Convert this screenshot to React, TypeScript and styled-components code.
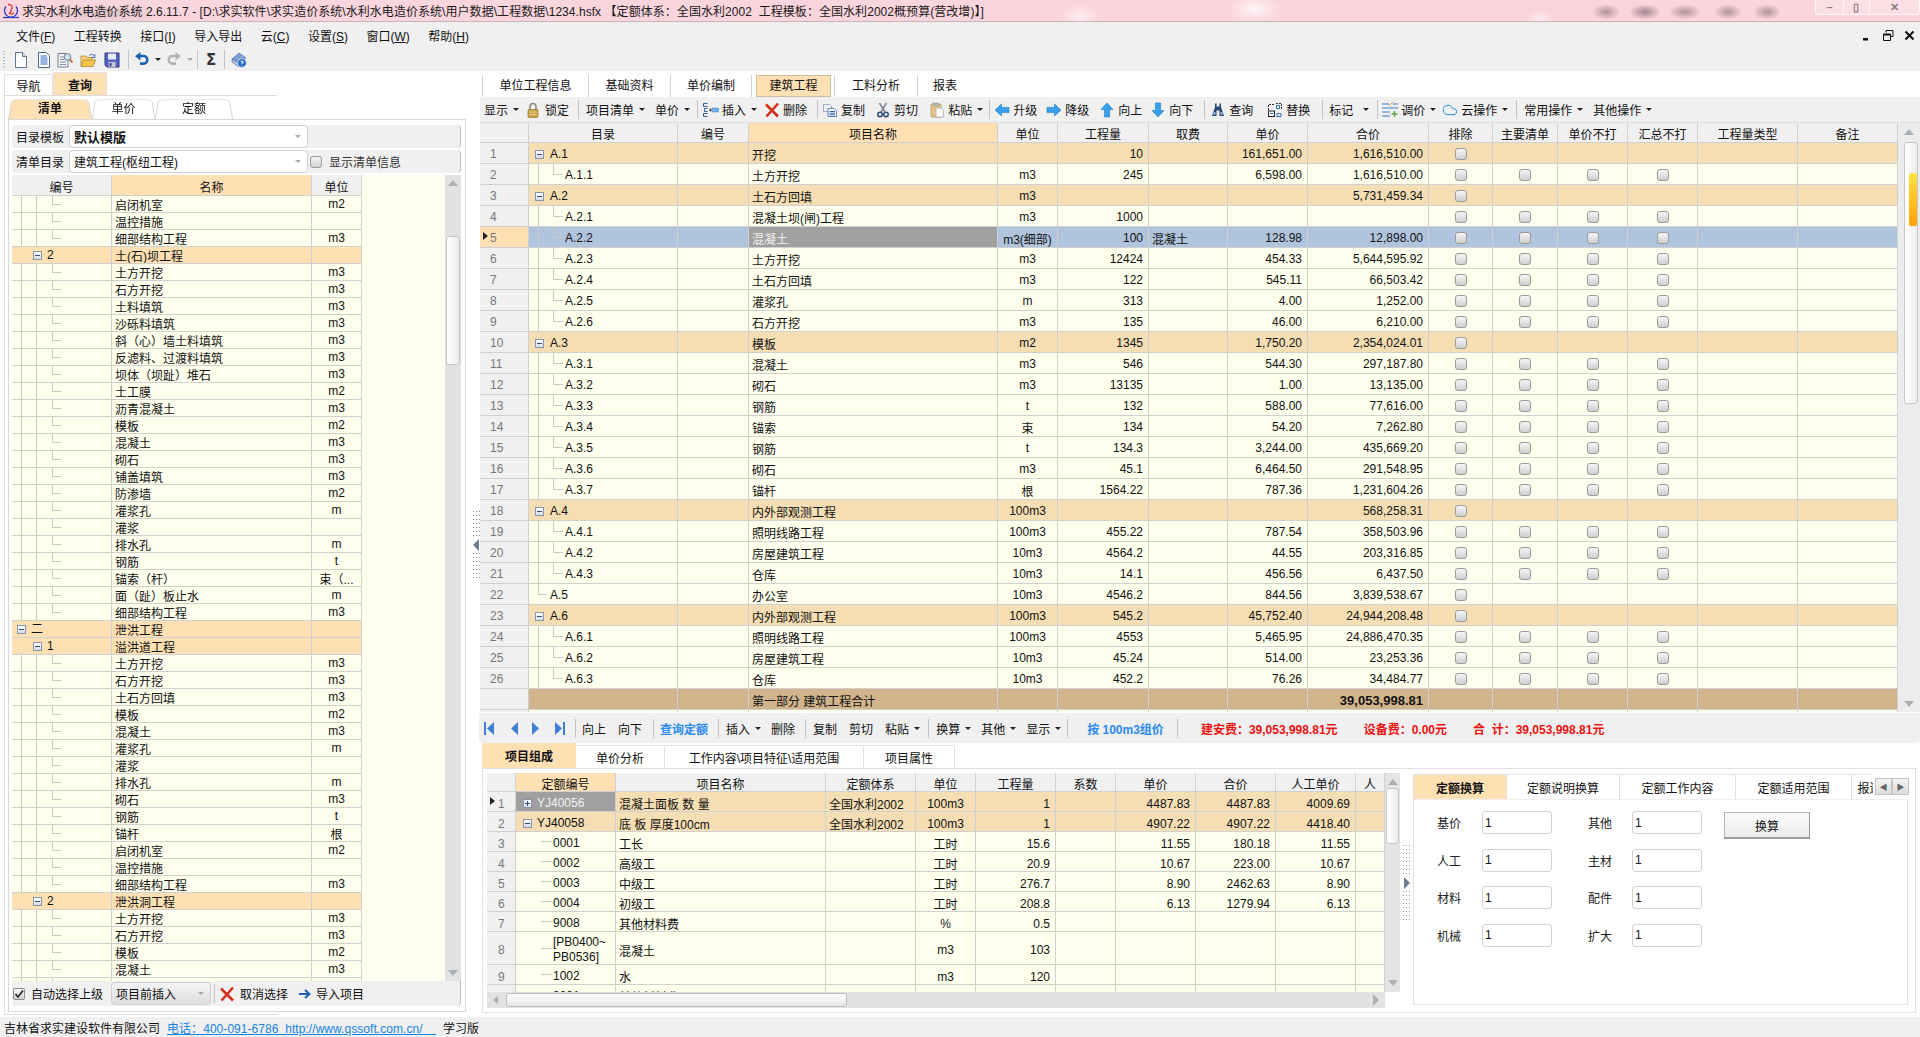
import React from 'react';
import styled, { createGlobalStyle } from 'styled-components';
import { Cloud } from 'lucide-react';

const FONT = '"Liberation Sans", "Noto Sans CJK SC", sans-serif';
const LINE = '#d0d0d0';
const CREAM = '#ffffee';
const HEAD = '#ffe0b2';
const WHEAT = '#f5deb3';
const TAN = '#d2b48c';
const STEEL = '#b0c4de';
const PANEL = '#f0f0f0';

const Global = createGlobalStyle`
  html, body { margin: 0; padding: 0; height: 100%; overflow: hidden; background: #fff; }
  body { font-family: ${FONT}; font-size: 12px; color: #111; }
  #root { height: 100%; }
  * { box-sizing: border-box; }
`;

/* ---------- icons ---------- */
const Arrow = ({ rot = 0 }: { rot?: number }) => (
  <svg width="16" height="16" viewBox="0 0 16 16">
    <path transform={`rotate(${rot} 8 8)`} d="M1 8 7.5 2v3.4H15v5.2H7.5V14Z" fill="#38a0ea" stroke="#1f78bd" strokeWidth=".6" />
  </svg>
);

const icons: Record<string, React.ReactNode> = {
  lock: (
    <svg width="16" height="16" viewBox="0 0 16 16">
      <path d="M5 8V4.500a3 3 0 0 1 6 0V8" fill="none" stroke="#8d8d80" strokeWidth="1.600" />
      <rect x="3" y="7.500" width="10" height="8" rx="1" fill="#c9a24a" stroke="#8b6a22" strokeWidth=".6" />
      <path d="M4 10h8M4 12.500h8" stroke="#e8d08e" />
    </svg>
  ),
  insert: (
    <svg width="17" height="16" viewBox="0 0 17 16">
      <path d="M5.500 1.500h-4v3h4M5.500 6.500h-3v3h3M5.500 11.500h-4v3h4" fill="none" stroke="#2d5f9e" />
      <path d="M7 8h3M8.500 6.500v3" stroke="#333" />
      <rect x="10.500" y="6" width="6" height="4" fill="#6fb4ee" stroke="#3b83c4" strokeWidth=".5" />
    </svg>
  ),
  del: (
    <svg width="16" height="16" viewBox="0 0 16 16">
      <path d="M2 2.500 14 14.500M14 1.500 2.500 14.500" stroke="#d4301f" strokeWidth="2.600" />
    </svg>
  ),
  copy: (
    <svg width="16" height="16" viewBox="0 0 16 16">
      <path d="M1.500 2.500h6l2 2v5h-8Z" fill="#eef2f8" stroke="#7a90ad" strokeWidth=".7" />
      <path d="M6 6.500h6l2.500 2.500v5.500H6Z" fill="#fff" stroke="#3c62a0" strokeWidth=".8" />
      <path d="M7.500 9.500h5.500M7.500 11.200h5.500M7.500 12.900h5.500" stroke="#2f64b5" />
    </svg>
  ),
  cut: (
    <svg width="16" height="16" viewBox="0 0 16 16">
      <path d="M4.500 1 10 10M11.500 1 6 10" stroke="#7b8794" strokeWidth="1.500" />
      <circle cx="5" cy="12.500" r="2.200" fill="none" stroke="#2a4a78" strokeWidth="1.500" />
      <circle cx="11" cy="12.500" r="2.200" fill="none" stroke="#2a4a78" strokeWidth="1.500" />
    </svg>
  ),
  paste: (
    <svg width="16" height="16" viewBox="0 0 16 16">
      <rect x="2" y="2" width="10" height="13" rx="1" fill="#e3c58a" stroke="#a98a4e" strokeWidth=".7" />
      <rect x="4.500" y="1" width="5" height="2.600" fill="#b9bec6" stroke="#80858d" strokeWidth=".5" />
      <path d="M7 6h5l2.500 2.500V15H7Z" fill="#fff" stroke="#9aa3ad" strokeWidth=".7" />
    </svg>
  ),
  left: <Arrow />,
  right: <Arrow rot={180} />,
  up: <Arrow rot={90} />,
  down: <Arrow rot={270} />,
  find: (
    <svg width="16" height="16" viewBox="0 0 16 16">
      <path d="M5 1.500h1.600v3h2.800v-3H11V5l3 9H9.500V8.500h-3V14H2L5 5Z" fill="#27466f" />
      <path d="M3.500 10h2v3h-2ZM10.500 10h2v3h-2Z" fill="#8eb2dc" />
    </svg>
  ),
  replace: (
    <svg width="16" height="16" viewBox="0 0 16 16">
      <path d="M1.500 8V2.500H7M9 1.500h5.500V7" fill="none" stroke="#333" strokeDasharray="2 1" />
      <rect x="1.500" y="9" width="6" height="5.500" fill="#fff" stroke="#1f1f1f" />
      <path d="M3 11.500h3M9.500 3.500h3v3h-3ZM10 11.500h4v3h-4Z" fill="none" stroke="#2a6cb0" />
    </svg>
  ),
  tune: (
    <svg width="16" height="16" viewBox="0 0 16 16">
      <path d="M0 2h7M11 2h5M0 6h16M0 10h8M0 14h8" stroke="#3d78c8" />
      <path d="m7 4 4-4" stroke="#d4a23a" />
      <path d="M12.500 9v6M9.500 12h6" stroke="#5aa845" strokeWidth="1.400" />
    </svg>
  ),
  cloud: <Cloud size={16} color="#2a90d8" strokeWidth={1.5} />,
  newdoc: (
    <svg width="16" height="16" viewBox="0 0 16 16">
      <path d="M2.500.5h7l4 4v11h-11Z" fill="#fff" stroke="#5f7590" />
      <path d="M9.500.5v4h4" fill="#d7e2ef" stroke="#5f7590" />
    </svg>
  ),
  textdoc: (
    <svg width="16" height="16" viewBox="0 0 16 16">
      <path d="M2.500.5h8l3 3v12h-11Z" fill="#fff" stroke="#49668c" />
      <path d="M4.500 4h6M4.500 6h7M4.500 8h7M4.500 10h7M4.500 12h7" stroke="#2a66c8" />
    </svg>
  ),
  preview: (
    <svg width="16" height="16" viewBox="0 0 16 16">
      <path d="M1 1.500h8l2 2V15H1Z" fill="#f5f5f5" stroke="#6f7f93" />
      <path d="M3 5h4M3 7.500h4M3 10h6M3 12.500h6" stroke="#7c8a9b" />
      <circle cx="10.500" cy="5" r="3.400" fill="#c9e3f7" stroke="#6b7f8f" />
      <path d="m13 7.500 2.500 3" stroke="#c47a2e" strokeWidth="2" />
    </svg>
  ),
  open: (
    <svg width="16" height="16" viewBox="0 0 16 16">
      <path d="M1 14V4h5l1 1.500h5V8" fill="#f4d47c" stroke="#a8812c" strokeWidth=".8" />
      <path d="M1 14.500 3.500 8H15.500L13 14.500Z" fill="#f7c64c" stroke="#a8812c" strokeWidth=".8" />
      <path d="M9 3.500q2.500-3 5 0l1-1v3h-3l1-1" fill="none" stroke="#4a79b5" />
    </svg>
  ),
  save: (
    <svg width="16" height="16" viewBox="0 0 16 16">
      <path d="M1 1h14v14H3l-2-2Z" fill="#5463c4" stroke="#2c3680" />
      <rect x="4" y="1.500" width="8" height="6" fill="#e8ecf5" />
      <rect x="4.500" y="10" width="7" height="5" fill="#c3c7d4" />
      <rect x="5.500" y="11" width="2" height="3.400" fill="#3a4590" />
    </svg>
  ),
  undo: (
    <svg width="16" height="16" viewBox="0 0 16 16">
      <path d="M5 4h4.500a3.800 3.800 0 0 1 0 7.600H6" fill="none" stroke="#1b64ad" strokeWidth="2.600" />
      <path d="M6.500 0 1 4.200l5.500 4.200Z" fill="#1b64ad" />
    </svg>
  ),
  redo: (
    <svg width="16" height="16" viewBox="0 0 16 16">
      <path d="M11 4H6.500a3.800 3.800 0 0 0 0 7.600H10" fill="none" stroke="#b4b4b4" strokeWidth="2.600" />
      <path d="M9.500 0 15 4.200 9.500 8.400Z" fill="#b4b4b4" />
    </svg>
  ),
  help: (
    <svg width="16" height="16" viewBox="0 0 16 16">
      <path d="M1 7 8 1l7 5-7 6Z" fill="#7f9fd4" stroke="#48659c" strokeWidth=".7" />
      <path d="M1 7v3l7 5 1-3Z" fill="#b7c8e6" stroke="#48659c" strokeWidth=".7" />
      <circle cx="11" cy="11" r="4.400" fill="#2a6cc0" stroke="#fff" strokeWidth=".6" />
      <path d="M9.600 9.800q1.400-1.500 2.800 0 0 1-1.400 1.400v.8M11 13v.7" fill="none" stroke="#fff" />
    </svg>
  ),
};

const Logo = () => (
  <svg width="18" height="18" viewBox="0 0 18 18">
    <path d="M4 4.500a6.500 6.500 0 1 0 10 0" fill="none" stroke="#1d3fc4" strokeWidth="1.300" />
    <path d="M1 15.500h16" stroke="#1d3fc4" strokeWidth="1.200" />
    <path d="M6 2.500q5 0 4 3.500t-2.500 5.500q3 1.500 4.500-1" fill="none" stroke="#d83a2c" strokeWidth="1.300" />
  </svg>
);

const NavIcon = ({ kind }: { kind: 'first' | 'prev' | 'next' | 'last' }) => {
  const c = '#3f7fd6';
  return (
    <svg width="11" height="13" viewBox="0 0 11 13">
      {kind === 'first' && <><rect x="0" y="0" width="2" height="13" fill={c} /><path d="M10 0v13L3 6.500Z" fill={c} /></>}
      {kind === 'prev' && <path d="M8 0v13L1 6.500Z" fill={c} />}
      {kind === 'next' && <path d="M2 0v13l7-6.500Z" fill={c} />}
      {kind === 'last' && <><rect x="9" y="0" width="2" height="13" fill={c} /><path d="M1 0v13l7-6.500Z" fill={c} /></>}
    </svg>
  );
};

/* ---------- window chrome ---------- */
const Shell = styled.div`
  display: flex;
  flex-direction: column;
  width: 100%;
  height: 100%;
`;

const TitleBar = styled.div`
  height: 22px;
  flex: none;
  display: flex;
  align-items: center;
  padding-left: 2px;
  gap: 2px;
  border-bottom: 1px solid #c9b2b8;
  color: #1a1a1a;
  white-space: pre;
  letter-spacing: .05px;
  background:
    radial-gradient(ellipse 26px 14px at 1255px 9px, rgba(255,255,255,.75), transparent),
    radial-gradient(ellipse 18px 12px at 1080px 16px, rgba(255,255,255,.6), transparent),
    radial-gradient(ellipse 14px 12px at 1540px 22px, rgba(255,255,255,.6), transparent),
    radial-gradient(ellipse 14px 8px at 1606px 12px, rgba(120,90,100,.55), transparent),
    radial-gradient(ellipse 16px 8px at 1645px 12px, rgba(120,90,100,.65), transparent),
    radial-gradient(ellipse 16px 8px at 1685px 12px, rgba(120,90,100,.55), transparent),
    radial-gradient(ellipse 14px 8px at 1728px 12px, rgba(120,90,100,.55), transparent),
    radial-gradient(ellipse 14px 8px at 1767px 12px, rgba(120,90,100,.55), transparent),
    radial-gradient(ellipse 80px 10px at 100px 14px, rgba(170,170,170,.35), transparent),
    #fbd5dd;
`;

const WinButtons = styled.div`
  margin-left: auto;
  align-self: flex-start;
  width: 105px;
  height: 15px;
  display: grid;
  grid-template-columns: 28px 26px 1fr;
  border: 1px solid rgba(255,255,255,.7);
  border-top: 0;
  border-radius: 0 0 4px 4px;
  background: rgba(255,255,255,.25);
`;

const WinButton = styled.span`
  display: flex;
  align-items: center;
  justify-content: center;
  border-right: 1px solid rgba(255,255,255,.7);
  color: #8b7b80;
  font-size: 11px;
  font-weight: bold;
  &:last-child { border-right: 0; }
`;

const MenuBar = styled.div`
  height: 26px;
  flex: none;
  display: flex;
  align-items: center;
  padding-left: 6px;
  background: ${PANEL};
`;

const MenuItem = styled.span`
  padding: 0 10px;
  margin-right: -1.5px;
  u { text-underline-offset: 1px; }
`;

const MdiButtons = styled.div`
  margin-left: auto;
  display: flex;
  align-items: center;
  gap: 10px;
  padding-right: 5px;
`;

const IconStrip = styled.div`
  height: 23px;
  flex: none;
  display: flex;
  align-items: center;
  background: ${PANEL};
`;

const Grip = styled.span`
  width: 2px;
  height: 17px;
  margin-left: 3px;
  background: repeating-linear-gradient(#b5b5b5 0 1px, transparent 1px 3px);
`;

const Body = styled.div`
  flex: 1;
  min-height: 0;
  display: flex;
  background: #fff;
`;

const StatusBar = styled.div`
  height: 20px;
  flex: none;
  display: flex;
  align-items: center;
  padding: 1px 0 0 4px;
  background: ${PANEL};
  white-space: pre;
`;

const StatusLink = styled.a`
  margin: 0 7px;
  color: #1683e3;
  text-decoration: underline;
  letter-spacing: .05px;
`;

/* ---------- toolbars ---------- */
const Item = styled.span<{ $ml?: number; $gap?: number }>`
  display: inline-flex;
  align-items: center;
  flex: none;
  margin-left: ${p => p.$ml ?? 0}px;
  gap: ${p => p.$gap ?? 3}px;
  white-space: pre;
`;

const Caret = styled.i<{ $gray?: boolean; $ml?: number }>`
  flex: none;
  width: 0;
  height: 0;
  margin-left: ${p => p.$ml ?? 3}px;
  border: 3px solid transparent;
  border-bottom-width: 0;
  border-top: 3px solid ${p => (p.$gray ? '#aaa' : '#222')};
`;

const Sep = styled.i<{ $ml?: number }>`
  flex: none;
  width: 1px;
  height: 19px;
  margin-left: ${p => p.$ml ?? 0}px;
  background: #c4c4c4;
`;

const IconSlot = styled.span<{ $ml?: number }>`
  display: flex;
  flex: none;
  margin-left: ${p => p.$ml ?? 0}px;
`;

const SigmaGlyph = styled.span`
  margin-left: 8px;
  font-size: 15px;
  font-weight: bold;
  color: #333;
  font-family: "DejaVu Sans", sans-serif;
`;

type Tool = { sep?: boolean; ic?: string; t?: string; caret?: boolean; ml?: number; gap?: number; cg?: number };

const ToolRow = ({ items }: { items: Tool[] }) => (
  <>
    {items.map((it, i) =>
      it.sep ? (
        <Sep key={i} $ml={it.ml} />
      ) : (
        <Item key={i} $ml={it.ml} $gap={it.gap}>
          {it.ic && <IconSlot>{icons[it.ic]}</IconSlot>}
          {it.t}
          {it.caret && <Caret $ml={it.cg ?? 2} />}
        </Item>
      ),
    )}
  </>
);

const mainTools: Tool[] = [
  { t: '显示', caret: true, ml: 4 },
  { ic: 'lock', t: '锁定', ml: 6, gap: 4 },
  { sep: true, ml: 9 },
  { t: '项目清单', caret: true, ml: 7 },
  { t: '单价', caret: true, ml: 10 },
  { sep: true, ml: 7 },
  { ic: 'insert', t: '插入', caret: true, ml: 4 },
  { ic: 'del', t: '删除', ml: 7 },
  { sep: true, ml: 10 },
  { ic: 'copy', t: '复制', ml: 4 },
  { ic: 'cut', t: '剪切', ml: 10 },
  { ic: 'paste', t: '粘贴', caret: true, ml: 11 },
  { sep: true, ml: 6 },
  { ic: 'left', t: '升级', ml: 4 },
  { ic: 'right', t: '降级', ml: 9 },
  { ic: 'up', t: '向上', ml: 10 },
  { ic: 'down', t: '向下', ml: 8 },
  { sep: true, ml: 11 },
  { ic: 'find', t: '查询', ml: 5 },
  { ic: 'replace', t: '替换', ml: 14 },
  { sep: true, ml: 12 },
  { t: '标记', caret: true, ml: 6, cg: 7 },
  { sep: true, ml: 8 },
  { ic: 'tune', t: '调价', caret: true, ml: 4 },
  { ic: 'cloud', t: '云操作', caret: true, ml: 6 },
  { sep: true, ml: 8 },
  { t: '常用操作', caret: true, ml: 7 },
  { t: '其他操作', caret: true, ml: 10 },
];

const MainToolbar = styled.div`
  height: 26px;
  flex: none;
  display: flex;
  align-items: center;
  background: ${PANEL};
  border-bottom: 1px solid #ddd;
`;

const BottomToolbar = styled.div`
  height: 30px;
  flex: none;
  margin-top: 1px;
  margin-left: -1px;
  display: flex;
  align-items: center;
  background: ${PANEL};
  border-radius: 0 0 4px 4px;
`;

const BlueLabel = styled.span<{ $ml: number }>`
  flex: none;
  margin-left: ${p => p.$ml}px;
  color: #2a8af0;
  font-weight: bold;
`;

const RedLabel = styled.span<{ $ml: number }>`
  flex: none;
  margin-left: ${p => p.$ml}px;
  color: #ee1111;
  font-weight: bold;
  white-space: pre;
`;

/* ---------- tree bits ---------- */
const TreeBox = styled.i<{ $plus?: boolean }>`
  position: relative;
  flex: none;
  display: block;
  width: 9px;
  height: 9px;
  border: 1px solid #8695ad;
  background: linear-gradient(#fff, #d5dcea);
  &::after {
    content: '';
    position: absolute;
    left: 1px;
    right: 1px;
    top: 3px;
    height: 1px;
    background: #33507a;
  }
  &::before {
    content: '';
    display: ${p => (p.$plus ? 'block' : 'none')};
    position: absolute;
    top: 1px;
    bottom: 1px;
    left: 3px;
    width: 1px;
    background: #33507a;
  }
`;

const CheckBox = styled.i<{ $ml?: number }>`
  display: block;
  flex: none;
  width: 12px;
  height: 12px;
  margin-left: ${p => p.$ml ?? 0}px;
  border: 1px solid #9a9a9a;
  border-radius: 3px;
  background: linear-gradient(#f6f6f6, #cfcfcf);
`;

/* ---------- grids ---------- */
const GridRow = styled.div<{ $cols: string; $h: number }>`
  display: grid;
  grid-template-columns: ${p => p.$cols};
  height: ${p => p.$h}px;
  flex: none;
`;

type CellProps = { $align?: string; $bg?: string; $color?: string; $bold?: boolean; $pt?: number; $pl?: number; $pr?: number; $fs?: number };

const Cell = styled.div<CellProps>`
  display: flex;
  align-items: center;
  justify-content: ${p => p.$align ?? 'flex-start'};
  padding: ${p => p.$pt ?? 2}px ${p => p.$pr ?? 5}px 0 ${p => p.$pl ?? 5}px;
  overflow: hidden;
  white-space: pre;
  color: ${p => p.$color ?? '#111'};
  background-color: ${p => p.$bg ?? 'transparent'};
  font-weight: ${p => (p.$bold ? 'bold' : 'normal')};
  font-size: ${p => p.$fs ?? 12}px;
  border-right: 1px solid ${LINE};
  border-bottom: 1px solid ${LINE};
`;

const TreeCell = styled(Cell)<{ $guides?: string; $gap?: number }>`
  ${p => (p.$guides ? `background: ${p.$guides};` : '')}
  gap: ${p => p.$gap ?? 5}px;
  line-height: 15px;
`;

const RowNo = styled(Cell)`
  color: #777;
  position: relative;
`;

const RowMark = styled.i`
  position: absolute;
  left: 3px;
  top: 5px;
  width: 0;
  height: 0;
  border-left: 5px solid #222;
  border-top: 4px solid transparent;
  border-bottom: 4px solid transparent;
`;

const Spacer = styled.span<{ $w: number }>`
  flex: none;
  width: ${p => p.$w}px;
`;

const vLine = (x: number, h = '100%', c = '#c9c9c9') =>
  `linear-gradient(${c}, ${c}) ${x}px 0 / 1px ${h} no-repeat`;
const hLine = (x: number, w: number, c = '#c9c9c9') =>
  `linear-gradient(${c}, ${c}) ${x}px 50% / ${w}px 1px no-repeat`;

/* ---------- scroll bars ---------- */
const VBar = styled.div<{ $w: number; $bg?: string }>`
  position: relative;
  flex: none;
  width: ${p => p.$w}px;
  display: flex;
  flex-direction: column;
  background: ${p => p.$bg ?? '#e2e2e2'};
`;

const ScrollArrowUp = styled.i<{ $mt?: number }>`
  flex: none;
  width: 0;
  height: 0;
  align-self: center;
  margin-top: ${p => p.$mt ?? 0}px;
  border-left: 5px solid transparent;
  border-right: 5px solid transparent;
  border-bottom: 6px solid #aab0b5;
`;

const ScrollArrowDown = styled.i<{ $mb: number }>`
  flex: none;
  width: 0;
  height: 0;
  align-self: center;
  border-left: 5px solid transparent;
  border-right: 5px solid transparent;
  border-top: 6px solid #aab0b5;
  margin-top: auto;
  margin-bottom: ${p => p.$mb}px;
`;

const Thumb = styled.div<{ $mt: number; $h: number; $ml: number; $w: number }>`
  position: relative;
  flex: none;
  margin-top: ${p => p.$mt}px;
  margin-left: ${p => p.$ml}px;
  width: ${p => p.$w}px;
  height: ${p => p.$h}px;
  border: 1px solid #c6c6c6;
  border-radius: 3px;
  background: linear-gradient(90deg, #fff, #ececec);
`;

const ThumbMark = styled.i`
  position: absolute;
  left: 4px;
  right: 0;
  top: 30px;
  height: 53px;
  border-radius: 2px;
  background: linear-gradient(#ffe24a, #ffa200);
`;

const HBar = styled.div`
  flex: none;
  height: 16px;
  margin-right: 15px;
  display: flex;
  align-items: center;
  background: #e2e2e2;
`;

const HArrowLeft = styled.i`
  flex: none;
  margin-left: 6px;
  width: 0;
  height: 0;
  border-top: 4px solid transparent;
  border-bottom: 4px solid transparent;
  border-right: 5px solid #aab0b5;
`;

const HArrowRight = styled.i`
  flex: none;
  margin-left: auto;
  margin-right: 6px;
  width: 0;
  height: 0;
  border-top: 6px solid transparent;
  border-bottom: 6px solid transparent;
  border-left: 6px solid #aab0b5;
`;

const HThumb = styled.div`
  flex: none;
  margin-left: 8px;
  width: 341px;
  height: 14px;
  border: 1px solid #bbb;
  border-radius: 3px;
  background: linear-gradient(#fff, #e6e6e6);
`;

/* ---------- left pane ---------- */
const LeftPane = styled.div`
  flex: none;
  width: 472px;
  padding: 2px 0 2px 4px;
  display: flex;
  flex-direction: column;
`;

const NavTabs = styled.div`
  flex: none;
  width: 273px;
  height: 23px;
  display: flex;
  align-items: flex-end;
  border-bottom: 1px solid #ddd;
`;

const NavTab = styled.div<{ $on?: boolean }>`
  width: ${p => (p.$on ? 54 : 49)}px;
  height: ${p => (p.$on ? 23 : 21)}px;
  display: flex;
  align-items: center;
  justify-content: center;
  background: ${p => (p.$on ? HEAD : '#fff')};
  font-weight: ${p => (p.$on ? 'bold' : 'normal')};
  border: 1px solid #e2e2e2;
  border-bottom: 0;
`;

const LeftFrame = styled.div`
  flex: 1;
  min-height: 0;
  display: flex;
  flex-direction: column;
  border-left: 1px solid #e2e2e2;
  padding: 1px 6px 2px 3px;
`;

const SubTabs = styled.div`
  flex: none;
  height: 22px;
  display: flex;
`;

const SubTab = styled.div<{ $w: number; $on?: boolean }>`
  position: relative;
  width: ${p => p.$w}px;
  padding-bottom: 2px;
  display: flex;
  align-items: center;
  justify-content: center;
  font-weight: ${p => (p.$on ? 'bold' : 'normal')};
  z-index: ${p => (p.$on ? 2 : 1)};
  &::before {
    content: '';
    position: absolute;
    inset: 0;
    z-index: -1;
    border: 1px solid #d5d5d5;
    border-bottom: 0;
    border-radius: 5px 5px 0 0;
    background: ${p => (p.$on ? HEAD : '#fff')};
    transform-origin: bottom;
    transform: perspective(60px) rotateX(14deg);
  }
`;

const QueryPanel = styled.div`
  flex: 1;
  min-height: 0;
  display: flex;
  flex-direction: column;
  border: 1px solid #d8d8d8;
  padding: 5px 4px 5px 3px;
`;

const FormBar = styled.div`
  flex: none;
  height: 23px;
  margin-bottom: 2px;
  display: flex;
  align-items: center;
  padding-left: 4px;
  gap: 5px;
  background: ${PANEL};
  border-radius: 4px;
  border-right: 1px solid #bbb;
`;

const SelectBox = styled.div<{ $w: number; $bold?: boolean; $bg?: string; $ml?: number }>`
  flex: none;
  width: ${p => p.$w}px;
  height: 23px;
  margin-left: ${p => p.$ml ?? 0}px;
  display: flex;
  align-items: center;
  justify-content: space-between;
  padding: 0 6px 0 4px;
  border: 1px solid #cfcfcf;
  border-radius: 4px;
  background: ${p => p.$bg ?? '#fff'};
  font-weight: ${p => (p.$bold ? 'bold' : 'normal')};
  font-size: ${p => (p.$bold ? 13 : 12)}px;
`;

const CheckLabel = styled.span`
  margin-left: 2px;
  color: #333;
`;

const TreeArea = styled.div`
  flex: 1;
  min-height: 0;
  display: flex;
  overflow: hidden;
`;

const TreeBody = styled.div`
  flex: 1;
  min-width: 0;
  display: flex;
  flex-direction: column;
  overflow: hidden;
  background: ${CREAM};
`;

const LeftFoot = styled.div`
  flex: none;
  height: 25px;
  display: flex;
  align-items: center;
  background: ${PANEL};
  padding-left: 1px;
  border-radius: 0 0 4px 4px;
  border-right: 1px solid #bbb;
`;

const TickBox = styled.span`
  flex: none;
  width: 12px;
  height: 12px;
  display: flex;
  border: 1px solid #8b8b8b;
  border-radius: 2px;
  background: linear-gradient(#f6f6f6, #d2d2d2);
`;

const FootLine = styled.div`
  flex: none;
  width: 273px;
  height: 1px;
  background: #ddd;
`;

const Splitter = styled.div<{ $w: number; $mt: number }>`
  flex: none;
  width: ${p => p.$w}px;
  padding-top: ${p => p.$mt}px;
  display: flex;
  flex-direction: column;
  align-items: center;
  gap: 2px;
  background: #fff;
`;

const SplitDots = styled.i<{ $h: number }>`
  display: block;
  width: 7px;
  height: ${p => p.$h}px;
  background:
    repeating-linear-gradient(#8a96a3 0 1px, transparent 1px 4px) 0 0 / 1px 100% no-repeat,
    repeating-linear-gradient(#8a96a3 0 1px, transparent 1px 4px) 3px 0 / 1px 100% no-repeat,
    repeating-linear-gradient(#8a96a3 0 1px, transparent 1px 4px) 6px 0 / 1px 100% no-repeat;
`;

const SplitArrow = styled.i<{ $dir: 'l' | 'r' }>`
  display: block;
  width: 0;
  height: 0;
  border-top: 6px solid transparent;
  border-bottom: 6px solid transparent;
  ${p => (p.$dir === 'l' ? 'border-right: 6px solid #6b7c8f;' : 'border-left: 6px solid #6b7c8f;')}
`;

/* ---------- right pane ---------- */
const RightPane = styled.div`
  flex: 1;
  min-width: 0;
  padding-top: 4px;
  display: flex;
  flex-direction: column;
`;

const PageTabs = styled.div`
  flex: none;
  height: 22px;
  display: flex;
  align-items: stretch;
  padding-left: 2px;
  background: #fff;
`;

const PageTab = styled.div<{ $w: number; $on?: boolean; $end?: boolean }>`
  flex: none;
  width: ${p => p.$w}px;
  padding-bottom: 4px;
  display: flex;
  align-items: center;
  justify-content: center;
  margin-right: ${p => (p.$on ? 3 : 0)}px;
  margin-left: ${p => (p.$on ? 4 : 0)}px;
  background: ${p => (p.$on ? HEAD : 'transparent')};
  border: ${p => (p.$on ? '1px solid #cdbd9c' : '0')};
  border-left: 1px solid ${p => (p.$on ? '#cdbd9c' : '#d2d2d2')};
  ${p => (p.$end ? 'border-right: 1px solid #d2d2d2;' : '')}
`;

const MainArea = styled.div`
  flex: none;
  height: 589px;
  display: flex;
  overflow: hidden;
`;

const MainBody = styled.div`
  flex: 1;
  min-width: 0;
  display: flex;
  flex-direction: column;
  overflow: hidden;
`;

const CompTabs = styled.div`
  flex: none;
  height: 25px;
  padding-left: 2px;
  display: flex;
  align-items: flex-end;
`;

const CompTab = styled.div<{ $w: number; $on?: boolean }>`
  flex: none;
  width: ${p => p.$w}px;
  height: ${p => (p.$on ? 25 : 23)}px;
  display: flex;
  align-items: center;
  justify-content: center;
  background: ${p => (p.$on ? HEAD : '#fff')};
  font-weight: ${p => (p.$on ? 'bold' : 'normal')};
  border: ${p => (p.$on ? '0' : '1px solid #e0e0e0')};
  border-left: 0;
  border-bottom: 0;
`;

const CompPanel = styled.div`
  flex: none;
  height: 245px;
  margin: 0 4px 0 2px;
  padding: 4px 7px 4px 4px;
  border: 1px solid #e0e0e0;
  display: flex;
`;

const SubGridWrap = styled.div`
  flex: none;
  width: 913px;
  display: flex;
  flex-direction: column;
`;

const SubGridTop = styled.div`
  flex: 1;
  min-height: 0;
  display: flex;
`;

const SubGridBody = styled.div`
  flex: 1;
  min-width: 0;
  display: flex;
  flex-direction: column;
  overflow: hidden;
`;

const CalcPanel = styled.div`
  flex: none;
  width: 495px;
  display: flex;
  flex-direction: column;
  margin-bottom: 3px;
`;

const CalcTabs = styled.div`
  flex: none;
  height: 25px;
  margin-top: 1px;
  display: flex;
  align-items: stretch;
  margin-right: -3px;
`;

const CalcTabClip = styled.div`
  flex: none;
  width: 460px;
  display: flex;
  overflow: hidden;
  border-top: 1px solid #e4e4e4;
`;

const CalcTab = styled.div<{ $w: number; $on?: boolean }>`
  flex: none;
  width: ${p => p.$w}px;
  display: flex;
  align-items: center;
  justify-content: center;
  background: ${p => (p.$on ? HEAD : '#fff')};
  font-weight: ${p => (p.$on ? 'bold' : 'normal')};
  border-right: 1px solid #e0e0e0;
  border-left: ${p => (p.$on ? '1px solid #e0e0e0' : '0')};
`;

const CalcArrows = styled.div`
  flex: none;
  display: flex;
  align-items: center;
  margin-left: 2px;
`;

const CalcArrow = styled.span`
  width: 17px;
  height: 17px;
  display: flex;
  align-items: center;
  justify-content: center;
  border: 1px solid #c4c4c4;
  background: linear-gradient(#f4f4f4, #dcdcdc);
  font-size: 8px;
  color: #666;
`;

const CalcBody = styled.div`
  flex: 1;
  border: 1px solid #e0e0e0;
  border-top: 1px solid #eee;
  padding: 11px 0 0 23px;
`;

const CalcForm = styled.div`
  display: grid;
  grid-template-columns: 45px 70px 36px 44px 70px 22px 86px;
  grid-auto-rows: 23px;
  row-gap: 14.5px;
  align-items: center;
`;

const CalcInput = styled.input<{ $col: number }>`
  grid-column: ${p => p.$col};
  width: 70px;
  height: 23px;
  padding: 0 2px;
  border: 1px solid #d2d2d2;
  border-radius: 3px;
  background: #fff;
  font: 12px ${FONT};
  color: #111;
  outline: none;
`;

const CalcLabel = styled.span<{ $col: number }>`
  grid-column: ${p => p.$col};
  color: #222;
`;

const CalcButton = styled.button`
  grid-column: 7;
  grid-row: 1;
  width: 86px;
  height: 27px;
  align-self: start;
  margin-top: 1px;
  font: 12px ${FONT};
  color: #111;
  border: 1px solid #b4b4b4;
  border-right-color: #999;
  border-bottom: 2px solid #9c9c9c;
  background: linear-gradient(#fafafa, #ececec);
`;

/* ---------- data ---------- */
const leftRows: [string, string, string, string][] = [
  ['l', '', '启闭机室', 'm2'], ['l', '', '温控措施', ''], ['l', '', '细部结构工程', 'm3'],
  ['g2', '2', '土(石)坝工程', ''],
  ['l', '', '土方开挖', 'm3'], ['l', '', '石方开挖', 'm3'], ['l', '', '土料填筑', 'm3'], ['l', '', '沙砾料填筑', 'm3'],
  ['l', '', '斜（心）墙土料填筑', 'm3'], ['l', '', '反滤料、过渡料填筑', 'm3'], ['l', '', '坝体（坝趾）堆石', 'm3'],
  ['l', '', '土工膜', 'm2'], ['l', '', '沥青混凝土', 'm3'], ['l', '', '模板', 'm2'], ['l', '', '混凝土', 'm3'],
  ['l', '', '砌石', 'm3'], ['l', '', '铺盖填筑', 'm3'], ['l', '', '防渗墙', 'm2'], ['l', '', '灌浆孔', 'm'], ['l', '', '灌浆', ''],
  ['l', '', '排水孔', 'm'], ['l', '', '钢筋', 't'], ['l', '', '锚索（杆）', '束（...'], ['l', '', '面（趾）板止水', 'm'],
  ['l', '', '细部结构工程', 'm3'],
  ['g1', '二', '泄洪工程', ''], ['g2', '1', '溢洪道工程', ''],
  ['l', '', '土方开挖', 'm3'], ['l', '', '石方开挖', 'm3'], ['l', '', '土石方回填', 'm3'], ['l', '', '模板', 'm2'], ['l', '', '混凝土', 'm3'],
  ['l', '', '灌浆孔', 'm'], ['l', '', '灌浆', ''], ['l', '', '排水孔', 'm'], ['l', '', '砌石', 'm3'], ['l', '', '钢筋', 't'],
  ['l', '', '锚杆', '根'], ['l', '', '启闭机室', 'm2'], ['l', '', '温控措施', ''], ['l', '', '细部结构工程', 'm3'],
  ['g2', '2', '泄洪洞工程', ''],
  ['l', '', '土方开挖', 'm3'], ['l', '', '石方开挖', 'm3'], ['l', '', '模板', 'm2'], ['l', '', '混凝土', 'm3'],
  ['l', '', '', ''],
];

type MainRow = [string, string, string, string, string, string, string, string];
const mainRows: MainRow[] = [
  ['g', 'A.1', '开挖', '', '10', '', '161,651.00', '1,616,510.00'],
  ['i', 'A.1.1', '土方开挖', 'm3', '245', '', '6,598.00', '1,616,510.00'],
  ['g', 'A.2', '土石方回填', 'm3', '', '', '', '5,731,459.34'],
  ['i', 'A.2.1', '混凝土坝(闸)工程', 'm3', '1000', '', '', ''],
  ['s', 'A.2.2', '混凝土', 'm3(细部)', '100', '混凝土', '128.98', '12,898.00'],
  ['i', 'A.2.3', '土方开挖', 'm3', '12424', '', '454.33', '5,644,595.92'],
  ['i', 'A.2.4', '土石方回填', 'm3', '122', '', '545.11', '66,503.42'],
  ['i', 'A.2.5', '灌浆孔', 'm', '313', '', '4.00', '1,252.00'],
  ['i', 'A.2.6', '石方开挖', 'm3', '135', '', '46.00', '6,210.00'],
  ['g', 'A.3', '模板', 'm2', '1345', '', '1,750.20', '2,354,024.01'],
  ['i', 'A.3.1', '混凝土', 'm3', '546', '', '544.30', '297,187.80'],
  ['i', 'A.3.2', '砌石', 'm3', '13135', '', '1.00', '13,135.00'],
  ['i', 'A.3.3', '钢筋', 't', '132', '', '588.00', '77,616.00'],
  ['i', 'A.3.4', '锚索', '束', '134', '', '54.20', '7,262.80'],
  ['i', 'A.3.5', '钢筋', 't', '134.3', '', '3,244.00', '435,669.20'],
  ['i', 'A.3.6', '砌石', 'm3', '45.1', '', '6,464.50', '291,548.95'],
  ['i', 'A.3.7', '锚杆', '根', '1564.22', '', '787.36', '1,231,604.26'],
  ['g', 'A.4', '内外部观测工程', '100m3', '', '', '', '568,258.31'],
  ['i', 'A.4.1', '照明线路工程', '100m3', '455.22', '', '787.54', '358,503.96'],
  ['i', 'A.4.2', '房屋建筑工程', '10m3', '4564.2', '', '44.55', '203,316.85'],
  ['i', 'A.4.3', '仓库', '10m3', '14.1', '', '456.56', '6,437.50'],
  ['t', 'A.5', '办公室', '10m3', '4546.2', '', '844.56', '3,839,538.67'],
  ['g', 'A.6', '内外部观测工程', '100m3', '545.2', '', '45,752.40', '24,944,208.48'],
  ['i', 'A.6.1', '照明线路工程', '100m3', '4553', '', '5,465.95', '24,886,470.35'],
  ['i', 'A.6.2', '房屋建筑工程', '10m3', '45.24', '', '514.00', '23,253.36'],
  ['i', 'A.6.3', '仓库', '10m3', '452.2', '', '76.26', '34,484.77'],
];

const LEFT_COLS = '100px 200px 50px';
const MAIN_COLS = '49px 149px 71px 249px 60px 91px 79px 80px 121px 64px 65px 70px 70px 100px 100px';
const mainHead = ['', '目录', '编号', '项目名称', '单位', '工程量', '取费', '单价', '合价', '排除', '主要清单', '单价不打', '汇总不打', '工程量类型', '备注'];

const SUB_COLS = '29px 100px 210px 90px 60px 80px 60px 80px 80px 80px 29px';
const SUB_PT = 4;
const subHead = ['', '定额编号', '项目名称', '定额体系', '单位', '工程量', '系数', '单价', '合价', '人工单价', '人'];
const subRows: string[][] = [
  ['g+', 'YJ40056', '混凝土面板 数 量', '全国水利2002', '100m3', '1', '', '4487.83', '4487.83', '4009.69'],
  ['g', 'YJ40058', '底 板 厚度100cm', '全国水利2002', '100m3', '1', '', '4907.22', '4907.22', '4418.40'],
  ['i', '0001', '工长', '', '工时', '15.6', '', '11.55', '180.18', '11.55'],
  ['i', '0002', '高级工', '', '工时', '20.9', '', '10.67', '223.00', '10.67'],
  ['i', '0003', '中级工', '', '工时', '276.7', '', '8.90', '2462.63', '8.90'],
  ['i', '0004', '初级工', '', '工时', '208.8', '', '6.13', '1279.94', '6.13'],
  ['i', '9008', '其他材料费', '', '%', '0.5', '', '', '', ''],
  ['i', '[PB0400~\nPB0536]', '混凝土', '', 'm3', '103', '', '', '', ''],
  ['i', '1002', '水', '', 'm3', '120', '', '', '', ''],
  ['i', '3001', '其他材料费', '', '元', '5', '', '85.00', '1.65', '85.00'],
];

const RIGHT = 'flex-end';
const CENTER = 'center';
const LEAF_GUIDES = [vLine(9), vLine(24), vLine(40, '50%'), hLine(40, 9)].join(',');

/* ---------- parts ---------- */
const LeftTree = () => (
  <TreeArea>
    <TreeBody>
      <GridRow $cols={LEFT_COLS} $h={21}>
        <Cell $align={CENTER} $bg={PANEL}>编号</Cell>
        <Cell $align={CENTER} $bg={HEAD}>名称</Cell>
        <Cell $align={CENTER} $bg={PANEL}>单位</Cell>
      </GridRow>
      {leftRows.map(([kind, code, name, unit], i) => {
        const group = kind !== 'l';
        const bg = group ? HEAD : undefined;
        return (
          <GridRow key={i} $cols={LEFT_COLS} $h={17}>
            <TreeCell
              $bg={bg}
              $pt={0}
              $pl={kind === 'g1' ? 5 : kind === 'g2' ? 21 : 0}
              $guides={group ? undefined : LEAF_GUIDES}
            >
              {group && <TreeBox />}
              {code}
            </TreeCell>
            <Cell $bg={bg} $pt={0} $pl={3}>{name}</Cell>
            <Cell $bg={bg} $pt={0} $pl={0} $pr={0} $align={CENTER}>{unit}</Cell>
          </GridRow>
        );
      })}
    </TreeBody>
    <VBar $w={16}>
      <ScrollArrowUp $mt={5} />
      <Thumb $mt={50} $h={129} $ml={1} $w={14} />
      <ScrollArrowDown $mb={5} />
    </VBar>
  </TreeArea>
);

const MainGrid = () => {
  const bgOf = (k: string) => (k === 'g' ? WHEAT : k === 's' ? STEEL : CREAM);
  return (
    <MainArea>
      <MainBody>
        <GridRow $cols={MAIN_COLS} $h={20}>
          {mainHead.map((h, i) => (
            <Cell key={i} $align={CENTER} $bg={i === 3 ? HEAD : PANEL}>{h}</Cell>
          ))}
        </GridRow>
        {mainRows.map((r, i) => {
          const [k, code, name, unit, qty, fee, price, total] = r;
          const bg = bgOf(k);
          const one = k === 'g' || k === 't';
          const guides =
            k === 'g'
              ? undefined
              : k === 't'
                ? `${vLine(9, '50%')},${hLine(9, 9)},${bg}`
                : `${vLine(9)},${vLine(24, '50%')},${hLine(24, 10)},${bg}`;
          return (
            <GridRow key={i} $cols={MAIN_COLS} $h={21}>
              <RowNo $bg={k === 's' ? HEAD : PANEL} $pl={10}>
                {k === 's' && <RowMark />}
                {i + 1}
              </RowNo>
              <TreeCell $bg={bg} $pl={one ? 6 : 36} $pr={0} $gap={6} $guides={guides}>
                {k === 'g' && <TreeBox />}
                {k === 't' && <Spacer $w={9} />}
                {code}
              </TreeCell>
              <Cell $bg={bg} />
              <Cell $bg={k === 's' ? '#a0a0a0' : bg} $color={k === 's' ? '#f2f2f2' : '#111'} $pl={3}>{name}</Cell>
              <Cell $bg={bg} $align={CENTER} $pl={0} $pr={0}>{unit}</Cell>
              <Cell $bg={bg} $align={RIGHT}>{qty}</Cell>
              <Cell $bg={bg} $pl={3}>{fee}</Cell>
              <Cell $bg={bg} $align={RIGHT}>{price}</Cell>
              <Cell $bg={bg} $align={RIGHT}>{total}</Cell>
              <Cell $bg={bg} $align={CENTER}><CheckBox /></Cell>
              <Cell $bg={bg} $align={CENTER}>{!one && <CheckBox />}</Cell>
              <Cell $bg={bg} $align={CENTER}>{!one && <CheckBox />}</Cell>
              <Cell $bg={bg} $align={CENTER}>{!one && <CheckBox />}</Cell>
              <Cell $bg={bg} />
              <Cell $bg={bg} />
            </GridRow>
          );
        })}
        <GridRow $cols={MAIN_COLS} $h={21}>
          <Cell $bg={PANEL} />
          <Cell $bg={TAN} />
          <Cell $bg={TAN} />
          <Cell $bg={TAN} $pl={3}>第一部分 建筑工程合计</Cell>
          <Cell $bg={TAN} />
          <Cell $bg={TAN} />
          <Cell $bg={TAN} />
          <Cell $bg={TAN} />
          <Cell $bg={TAN} $align={RIGHT} $bold $fs={13}>39,053,998.81</Cell>
          {[0, 1, 2, 3, 4, 5].map(n => <Cell key={n} $bg={TAN} />)}
        </GridRow>
        <GridRow $cols={MAIN_COLS} $h={21}>
          {mainHead.map((_, i) => <Cell key={i} $bg={i === 0 ? PANEL : CREAM} />)}
        </GridRow>
      </MainBody>
      <VBar $w={22} $bg="#ececec">
        <ScrollArrowUp $mt={6} />
        <Thumb $mt={7} $h={262} $ml={6} $w={14}><ThumbMark /></Thumb>
        <ScrollArrowDown $mb={5} />
      </VBar>
    </MainArea>
  );
};

const SubGrid = () => (
  <SubGridWrap>
    <SubGridTop>
      <SubGridBody>
        <GridRow $cols={SUB_COLS} $h={19}>
          {subHead.map((h, i) => (
            <Cell key={i} $pt={3} $align={CENTER} $bg={i === 1 ? HEAD : PANEL}>{h}</Cell>
          ))}
        </GridRow>
        {subRows.map((r, i) => {
          const k = r[0];
          const group = k !== 'i';
          const bg = group ? WHEAT : CREAM;
          const picked = k === 'g+';
          return (
            <GridRow key={i} $cols={SUB_COLS} $h={r[1].includes('\n') ? 33 : 20}>
              <RowNo $pt={SUB_PT} $bg={PANEL} $pl={11}>
                {picked && <RowMark />}
                {i + 1}
              </RowNo>
              <TreeCell
                $pt={SUB_PT}
                $bg={picked ? '#a0a0a0' : bg}
                $color={picked ? '#f2f2f2' : '#111'}
                $pl={group ? 7 : 37}
                $pr={0}
                $guides={group ? undefined : `${hLine(25, 11)},${CREAM}`}
              >
                {group && <TreeBox $plus={picked} />}
                {r[1]}
              </TreeCell>
              <Cell $pt={SUB_PT} $bg={bg} $pl={3}>{r[2]}</Cell>
              <Cell $pt={SUB_PT} $bg={bg} $pl={3}>{r[3]}</Cell>
              <Cell $pt={SUB_PT} $bg={bg} $align={CENTER}>{r[4]}</Cell>
              <Cell $pt={SUB_PT} $bg={bg} $align={RIGHT}>{r[5]}</Cell>
              <Cell $pt={SUB_PT} $bg={bg}>{r[6]}</Cell>
              <Cell $pt={SUB_PT} $bg={bg} $align={RIGHT}>{r[7]}</Cell>
              <Cell $pt={SUB_PT} $bg={bg} $align={RIGHT}>{r[8]}</Cell>
              <Cell $pt={SUB_PT} $bg={bg} $align={RIGHT}>{r[9]}</Cell>
              <Cell $bg={bg} />
            </GridRow>
          );
        })}
      </SubGridBody>
      <VBar $w={15} $bg="#e4e4e4">
        <ScrollArrowUp $mt={6} />
        <Thumb $mt={3} $h={56} $ml={1} $w={13} />
        <ScrollArrowDown $mb={6} />
      </VBar>
    </SubGridTop>
    <HBar>
      <HArrowLeft />
      <HThumb />
      <HArrowRight />
    </HBar>
  </SubGridWrap>
);

const calcRows: [string, string][] = [['基价', '其他'], ['人工', '主材'], ['材料', '配件'], ['机械', '扩大']];
const calcTabs: [string, number][] = [['定额换算', 94], ['定额说明换算', 113], ['定额工作内容', 116], ['定额适用范围', 116], ['报送范围', 60]];

export default function App() {
  return (
    <Shell>
      <Global />
      <TitleBar>
        <Logo />
        <span>求实水利水电造价系统 2.6.11.7 - [D:\求实软件\求实造价系统\水利水电造价系统\用户数据\工程数据\1234.hsfx 【定额体系：全国水利2002  工程模板：全国水利2002概预算(营改增)】]</span>
        <WinButtons>
          <WinButton>–</WinButton>
          <WinButton>▯</WinButton>
          <WinButton>✕</WinButton>
        </WinButtons>
      </TitleBar>

      <MenuBar>
        <MenuItem>文件(<u>F</u>)</MenuItem>
        <MenuItem>工程转换</MenuItem>
        <MenuItem>接口(<u>I</u>)</MenuItem>
        <MenuItem>导入导出</MenuItem>
        <MenuItem>云(<u>C</u>)</MenuItem>
        <MenuItem>设置(<u>S</u>)</MenuItem>
        <MenuItem>窗口(<u>W</u>)</MenuItem>
        <MenuItem>帮助(<u>H</u>)</MenuItem>
        <MdiButtons>
          <svg width="11" height="11" viewBox="0 0 11 11"><rect x="1" y="8" width="5" height="2.500" fill="#111" /></svg>
          <svg width="11" height="11" viewBox="0 0 11 11"><path d="M3 2.500V.5h7v6H7.500M.5 4h7v6.500h-7Z" fill="none" stroke="#111" /><path d="M.5 4h7v1.500h-7Z" fill="#111" /></svg>
          <svg width="11" height="11" viewBox="0 0 11 11"><path d="m1.500 1.500 8 8M9.500 1.500l-8 8" stroke="#111" strokeWidth="2" /></svg>
        </MdiButtons>
      </MenuBar>

      <IconStrip>
        <Grip />
        <IconSlot $ml={8}>{icons.newdoc}</IconSlot>
        <IconSlot $ml={7}>{icons.textdoc}</IconSlot>
        <IconSlot $ml={5}>{icons.preview}</IconSlot>
        <IconSlot $ml={7}>{icons.open}</IconSlot>
        <IconSlot $ml={8}>{icons.save}</IconSlot>
        <Sep $ml={8} />
        <IconSlot $ml={5}>{icons.undo}</IconSlot>
        <Caret $ml={5} />
        <IconSlot $ml={5}>{icons.redo}</IconSlot>
        <Caret $ml={5} $gray />
        <Sep $ml={4} />
        <SigmaGlyph>Σ</SigmaGlyph>
        <Sep $ml={8} />
        <IconSlot $ml={6}>{icons.help}</IconSlot>
      </IconStrip>

      <Body>
        <LeftPane>
          <NavTabs>
            <NavTab>导航</NavTab>
            <NavTab $on>查询</NavTab>
          </NavTabs>
          <LeftFrame>
            <SubTabs>
              <SubTab $w={84} $on>清单</SubTab>
              <SubTab $w={63}>单价</SubTab>
              <SubTab $w={78}>定额</SubTab>
            </SubTabs>
            <QueryPanel>
              <FormBar>
                目录模板
                <SelectBox $w={239} $bold>默认模版<Caret $gray /></SelectBox>
              </FormBar>
              <FormBar>
                清单目录
                <SelectBox $w={239}>建筑工程(枢纽工程)<Caret $gray /></SelectBox>
                <CheckBox $ml={-3} />
                <CheckLabel>显示清单信息</CheckLabel>
              </FormBar>
              <LeftTree />
              <LeftFoot>
                <TickBox>
                  <svg width="10" height="10" viewBox="0 0 10 10"><path d="m1.500 5 2.500 3 5-6.500" fill="none" stroke="#222" strokeWidth="1.600" /></svg>
                </TickBox>
                <Item $ml={6}>自动选择上级</Item>
                <SelectBox $w={100} $ml={8} $bg="linear-gradient(#f4f4f4,#dedede)">
                  项目前插入<Caret $gray />
                </SelectBox>
                <Sep $ml={3} />
                <Item $ml={4} $gap={5}>{icons.del}取消选择</Item>
                <Item $ml={11} $gap={5}>
                  <svg width="12" height="10" viewBox="0 0 12 10"><path d="M0 5h9M6 1l4.500 4L6 9" fill="none" stroke="#1f5fb5" strokeWidth="2" /></svg>
                  导入项目
                </Item>
              </LeftFoot>
            </QueryPanel>
          </LeftFrame>
          <FootLine />
        </LeftPane>

        <Splitter $w={8} $mt={440}>
          <SplitDots $h={26} />
          <SplitArrow $dir="l" />
          <SplitDots $h={26} />
        </Splitter>

        <RightPane>
          <PageTabs>
            <PageTab $w={106}>单位工程信息</PageTab>
            <PageTab $w={82}>基础资料</PageTab>
            <PageTab $w={82} $end>单价编制</PageTab>
            <PageTab $w={75} $on>建筑工程</PageTab>
            <PageTab $w={83}>工料分析</PageTab>
            <PageTab $w={55}>报表</PageTab>
          </PageTabs>

          <MainToolbar>
            <ToolRow items={mainTools} />
          </MainToolbar>

          <MainGrid />

          <BottomToolbar>
            <IconSlot $ml={5}><NavIcon kind="first" /></IconSlot>
            <IconSlot $ml={15}><NavIcon kind="prev" /></IconSlot>
            <IconSlot $ml={9}><NavIcon kind="next" /></IconSlot>
            <IconSlot $ml={13}><NavIcon kind="last" /></IconSlot>
            <Sep $ml={10} />
            <Item $ml={6}>向上</Item>
            <Item $ml={12}>向下</Item>
            <Sep $ml={11} />
            <BlueLabel $ml={6}>查询定额</BlueLabel>
            <Sep $ml={10} />
            <ToolRow
              items={[
                { t: '插入', caret: true, ml: 7 },
                { t: '删除', ml: 10 },
                { sep: true, ml: 10 },
                { t: '复制', ml: 7 },
                { t: '剪切', ml: 12 },
                { t: '粘贴', caret: true, ml: 12 },
                { sep: true, ml: 8 },
                { t: '换算', caret: true, ml: 7 },
                { t: '其他', caret: true, ml: 10 },
                { t: '显示', caret: true, ml: 10 },
                { sep: true, ml: 6 },
              ]}
            />
            <BlueLabel $ml={19}>按 100m3组价</BlueLabel>
            <Sep $ml={13} />
            <RedLabel $ml={23}>建安费：39,053,998.81元</RedLabel>
            <RedLabel $ml={26}>设备费：0.00元</RedLabel>
            <RedLabel $ml={26}>合  计：39,053,998.81元</RedLabel>
          </BottomToolbar>

          <CompTabs>
            <CompTab $w={94} $on>项目组成</CompTab>
            <CompTab $w={89}>单价分析</CompTab>
            <CompTab $w={199}>工作内容\项目特征\适用范围</CompTab>
            <CompTab $w={91}>项目属性</CompTab>
          </CompTabs>

          <CompPanel>
            <SubGrid />
            <Splitter $w={13} $mt={72}>
              <SplitDots $h={30} />
              <SplitArrow $dir="r" />
              <SplitDots $h={30} />
            </Splitter>
            <CalcPanel>
              <CalcTabs>
                <CalcTabClip>
                  {calcTabs.map(([t, w], i) => (
                    <CalcTab key={t} $w={w} $on={i === 0}>{t}</CalcTab>
                  ))}
                </CalcTabClip>
                <CalcArrows>
                  <CalcArrow>◀</CalcArrow>
                  <CalcArrow>▶</CalcArrow>
                </CalcArrows>
              </CalcTabs>
              <CalcBody>
                <CalcForm>
                  {calcRows.map(([a, b]) => (
                    <React.Fragment key={a}>
                      <CalcLabel $col={1}>{a}</CalcLabel>
                      <CalcInput $col={2} defaultValue="1" readOnly />
                      <CalcLabel $col={4}>{b}</CalcLabel>
                      <CalcInput $col={5} defaultValue="1" readOnly />
                    </React.Fragment>
                  ))}
                  <CalcButton>换算</CalcButton>
                </CalcForm>
              </CalcBody>
            </CalcPanel>
          </CompPanel>
        </RightPane>
      </Body>

      <StatusBar>
        吉林省求实建设软件有限公司
        <StatusLink>电话：400-091-6786  http://www.qssoft.com.cn/    </StatusLink>
        学习版
      </StatusBar>
    </Shell>
  );
}
